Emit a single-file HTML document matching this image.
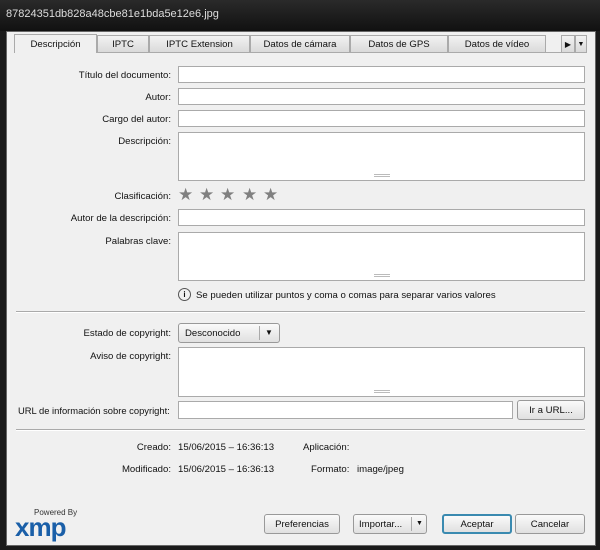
<!DOCTYPE html><html><head><style>
body{margin:0;width:600px;height:550px;background:#1a1a1a;font-family:"Liberation Sans",sans-serif;font-size:9.6px;color:#111;position:relative;overflow:hidden}
.a{position:absolute}
.t{position:absolute;top:0;left:0;width:600px;height:31px;background:linear-gradient(#2a2a2a,#111);}
.t span{position:absolute;left:6px;top:8px;color:#ddd;font-size:11px}
.panel{position:absolute;left:6px;top:31px;width:588px;height:513px;background:#f0f0f0;border:1px solid #666}
.f{position:absolute;background:#fff;border:1px solid #aaa;box-sizing:border-box}
.l{position:absolute;text-align:right;width:165px;left:6px}
.grip{position:absolute;bottom:3px;left:50%;width:16px;margin-left:-8px;border-top:1px solid #bbb;border-bottom:1px solid #bbb;height:1px}
.tab{position:absolute;top:35px;border:1px solid #aaa;background:linear-gradient(#f2f2f2,#dadada);text-align:center;line-height:17px;box-sizing:border-box;height:18px}
.btn{position:absolute;top:514px;height:20px;border:1px solid #999;border-radius:3px;background:linear-gradient(#fafafa,#e0e0e0);text-align:center;line-height:19px;box-sizing:border-box}
.sep{position:absolute;left:16px;width:569px;border-top:1px solid #aaa;border-bottom:1px solid #fff}
.star{position:absolute;top:185px;color:#808080;font-size:17px}
</style></head><body>
<div class="t"><span>87824351db828a48cbe81e1bda5e12e6.jpg</span></div>
<div class="panel"></div>
<div class="a" style="left:14px;top:52px;width:572px;border-top:1px solid #aaa"></div>
<div class="tab" style="left:14px;width:83px;top:34px;height:19px;background:#f0f0f0;border-bottom:none;line-height:20px">Descripción</div>
<div class="tab" style="left:97px;width:52px">IPTC</div>
<div class="tab" style="left:149px;width:101px">IPTC Extension</div>
<div class="tab" style="left:250px;width:100px">Datos de cámara</div>
<div class="tab" style="left:350px;width:98px">Datos de GPS</div>
<div class="tab" style="left:448px;width:98px">Datos de vídeo</div>
<div class="tab" style="left:561px;width:14px;font-size:8px">▶</div>
<div class="tab" style="left:575px;width:12px;font-size:7px">▼</div>

<div class="l" style="top:70px">Título del documento:</div><div class="f" style="left:178px;top:66px;width:407px;height:17px"></div>
<div class="l" style="top:92px">Autor:</div><div class="f" style="left:178px;top:88px;width:407px;height:17px"></div>
<div class="l" style="top:114px">Cargo del autor:</div><div class="f" style="left:178px;top:110px;width:407px;height:17px"></div>
<div class="l" style="top:136px">Descripción:</div><div class="f" style="left:178px;top:132px;width:407px;height:49px"><div class="grip"></div></div>
<div class="l" style="top:191px">Clasificación:</div>
<span class="star" style="left:178px">★</span><span class="star" style="left:199px">★</span><span class="star" style="left:220px">★</span><span class="star" style="left:242px">★</span><span class="star" style="left:263px">★</span>
<div class="l" style="top:213px">Autor de la descripción:</div><div class="f" style="left:178px;top:209px;width:407px;height:17px"></div>
<div class="l" style="top:236px">Palabras clave:</div><div class="f" style="left:178px;top:232px;width:407px;height:49px"><div class="grip"></div></div>
<div class="a" style="left:178px;top:288px;width:11px;height:11px;border:1px solid #555;border-radius:50%;font-size:8px;text-align:center;line-height:11px;font-weight:bold">i</div>
<div class="a" style="left:196px;top:290px">Se pueden utilizar puntos y coma o comas para separar varios valores</div>
<div class="sep" style="top:311px"></div>
<div class="l" style="top:328px">Estado de copyright:</div>
<div class="btn" style="left:178px;top:323px;width:102px;height:20px;text-align:left;padding-left:6px">Desconocido<span class="a" style="left:80px;top:2px;border-left:1px solid #aaa;height:14px;padding-left:5px;font-size:8px;line-height:14px">▼</span></div>
<div class="l" style="top:351px">Aviso de copyright:</div><div class="f" style="left:178px;top:347px;width:407px;height:50px"><div class="grip"></div></div>
<div class="a" style="left:18px;top:405px;font-size:9.4px">URL de información sobre copyright:</div>
<div class="f" style="left:178px;top:401px;width:335px;height:18px"></div>
<div class="btn" style="left:517px;top:400px;width:68px">Ir a URL...</div>
<div class="sep" style="top:429px"></div>
<div class="l" style="top:442px">Creado:</div><div class="a" style="left:178px;top:442px">15/06/2015 – 16:36:13</div>
<div class="a" style="left:303px;top:442px">Aplicación:</div>
<div class="l" style="top:464px">Modificado:</div><div class="a" style="left:178px;top:464px">15/06/2015 – 16:36:13</div>
<div class="a" style="left:311px;top:464px">Formato:</div><div class="a" style="left:357px;top:464px">image/jpeg</div>
<div class="a" style="left:34px;top:508px;font-size:8px;color:#333">Powered By</div>
<div class="a" style="left:15px;top:512px;font-size:26px;font-weight:bold;color:#1a5fa8;letter-spacing:-1px">xmp</div>
<div class="btn" style="left:264px;width:76px">Preferencias</div>
<div class="btn" style="left:353px;width:74px;text-align:left;padding-left:5px">Importar...<span class="a" style="left:57px;top:2px;border-left:1px solid #aaa;height:14px;padding-left:4px;font-size:7px;line-height:14px">▼</span></div>
<div class="btn" style="left:442px;width:70px;border:2px solid #3a8ab0;line-height:17px">Aceptar</div>
<div class="btn" style="left:515px;width:70px">Cancelar</div>
</body></html>
